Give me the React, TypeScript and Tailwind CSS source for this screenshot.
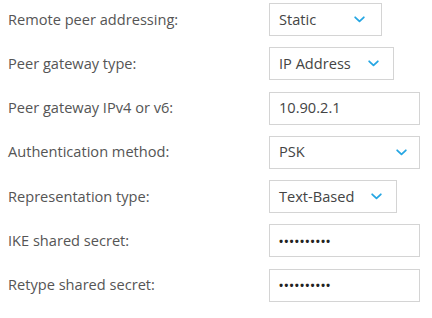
import React from 'react'

const Chevron = () => (
  <svg width="11" height="7" viewBox="0 0 11 7" fill="none">
    <path d="M1.2 1.3 L5.5 5.3 L9.8 1.3" stroke="#25a6e3" strokeWidth="1.8" strokeLinecap="round" strokeLinejoin="round" />
  </svg>
)

type Row = {
  label: string
  kind: 'select' | 'input' | 'password'
  value: string
  width: string
  pr?: string
}

const rows: Row[] = [
  { label: 'Remote peer addressing:', kind: 'select', value: 'Static', width: 'w-[113px]', pr: 'pr-[16px]' },
  { label: 'Peer gateway type:', kind: 'select', value: 'IP Address', width: 'w-[125px]', pr: 'pr-[14px]' },
  { label: 'Peer gateway IPv4 or v6:', kind: 'input', value: '10.90.2.1', width: 'w-[151px]' },
  { label: 'Authentication method:', kind: 'select', value: 'PSK', width: 'w-[151px]', pr: 'pr-[12px]' },
  { label: 'Representation type:', kind: 'select', value: 'Text-Based', width: 'w-[128px]', pr: 'pr-[14px]' },
  { label: 'IKE shared secret:', kind: 'password', value: '••••••••••', width: 'w-[151px]' },
  { label: 'Retype shared secret:', kind: 'password', value: '••••••••••', width: 'w-[151px]' },
]

export default function App() {
  return (
    <div className="w-[432px] h-[318px] bg-white font-['Open_Sans',sans-serif] pt-[3px]">
      <div className="flex flex-col gap-[11.3px]">
        {rows.map((r) => (
          <div key={r.label} className="flex items-center h-[33px]">
            <div className="w-[269px] pl-[8px] text-[14.6px] text-[#555555]">{r.label}</div>
            <div
              className={`${r.width} h-[33px] border border-[#d4d4d4] bg-white flex items-center justify-between pl-[9px] ${r.pr ?? ''}`}
            >
              {r.kind === 'password' ? (
                <span className="text-[11px] tracking-[1.1px] text-[#222222] font-bold">{r.value}</span>
              ) : (
                <span className="text-[14.6px] text-[#444444]">{r.value}</span>
              )}
              {r.kind === 'select' && <Chevron />}
            </div>
          </div>
        ))}
      </div>
    </div>
  )
}
